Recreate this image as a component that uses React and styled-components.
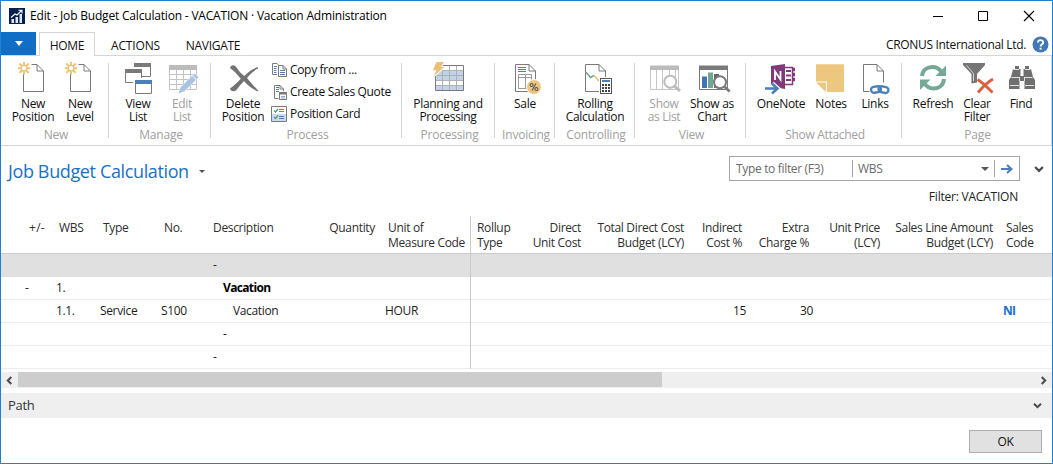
import React from "react";
import styled, { createGlobalStyle, css } from "styled-components";

const GlobalStyle = createGlobalStyle`
  * { box-sizing: border-box; }
  body { margin: 0; background: #fff; }
  button { font: inherit; color: inherit; letter-spacing: inherit; border: 0; background: none; padding: 0; }
`;

const Window = styled.div`
  width: 1053px;
  height: 464px;
  border: 1px solid #1883d7;
  background: #fff;
  display: flex;
  flex-direction: column;
  overflow: hidden;
  font: 12px/15px "Open Sans", sans-serif;
  letter-spacing: -0.3px;
  color: #111;
  white-space: nowrap;
`;

const Label = styled.span`
  letter-spacing: ${(p) => p.$ls ?? -0.33}px;
`;

/* Title bar */
const TitleBar = styled.header`
  height: 31px;
  flex: none;
  display: flex;
  align-items: center;
  padding: 0 17px 2px 8px;
`;
const WindowTitle = styled.h1`
  flex: 1;
  margin: 0 0 0 5px;
  font-size: 12px;
  font-weight: 400;
  color: #000;
  letter-spacing: -0.19px;
`;
const WindowControls = styled.div`
  display: flex;
  gap: 34px;
`;

/* Tabs */
const TabBar = styled.nav`
  height: 24px;
  flex: none;
  display: flex;
  border-bottom: 1px solid #d5d5d5;
`;
const FileButton = styled.button`
  width: 35px;
  height: 23px;
  background: #106ec6;
  display: flex;
  align-items: center;
  justify-content: center;
  margin-right: 3px;
`;
const Tab = styled.button`
  height: 24px;
  width: ${(p) => p.$w}px;
  margin-right: ${(p) => p.$gap || 0}px;
  letter-spacing: ${(p) => p.$ls}px;
  padding-top: 2px;
  ${(p) =>
    p.$active &&
    css`
      background: #fff;
      border: 1px solid #d5d5d5;
      border-bottom: 0;
      padding-top: 1px;
    `}
`;
const Company = styled.div`
  margin-left: auto;
  display: flex;
  align-items: center;
  gap: 6px;
  padding: 1px 3px 0 0;
`;

/* Ribbon */
const Ribbon = styled.section`
  height: 90px;
  flex: none;
  display: flex;
  border: 1px solid #d5d5d5;
  border-top: 0;
  border-left: 0;
`;
const Group = styled.div`
  width: ${(p) => p.$w}px;
  padding-left: ${(p) => p.$pad ?? 7}px;
  display: grid;
  grid-template-rows: 72px 15px;
  background: linear-gradient(#d5d5d5, #d5d5d5) no-repeat right 7px / 1px 75px;
  &:last-child { background: none; }
`;
const GroupItems = styled.div`
  display: flex;
`;
const GroupName = styled.div`
  text-align: center;
  color: #a0a0a0;
  margin-left: -${(p) => p.$pad ?? 7}px;
  padding-left: 2px;
  line-height: 14px;
  letter-spacing: ${(p) => p.$ls ?? -0.2}px;
`;
const BigButton = styled.button`
  width: ${(p) => p.$w}px;
  padding-top: 6px;
  display: flex;
  flex-direction: column;
  align-items: center;
  color: ${(p) => (p.$disabled ? "#a0a0a0" : "#111")};
`;
const BigIcon = styled.svg`
  width: 32px;
  height: 32px;
  flex: none;
  overflow: visible;
  margin-bottom: 3px;
`;
const ButtonLine = styled.span`
  height: 13px;
  line-height: 13px;
  letter-spacing: ${(p) => p.$ls ?? -0.3}px;
`;
const SmallButtons = styled.div`
  padding: 3px 0 0 3px;
  display: flex;
  flex-direction: column;
`;
const SmallButton = styled.button`
  height: 22px;
  line-height: 14px;
  display: flex;
  align-items: center;
  gap: 2px;
  & > span { padding-bottom: 1px; }
`;

/* Page heading and filter */
const PageHead = styled.section`
  height: 70px;
  flex: none;
  display: flex;
  justify-content: space-between;
  padding: 10px 8px 0 7px;
`;
const PageTitle = styled.h2`
  margin: 0;
  height: 30px;
  display: flex;
  align-items: center;
  gap: 10px;
  font-size: 18px;
  line-height: 24px;
  font-weight: 400;
  letter-spacing: -0.37px;
  color: #1a70c4;
`;
const FilterArea = styled.div`
  display: flex;
  flex-direction: column;
`;
const FilterRow = styled.div`
  display: flex;
  align-items: center;
  gap: 14px;
`;
const FilterBox = styled.div`
  width: 291px;
  height: 25px;
  border: 1px solid #a6a6a6;
  display: grid;
  grid-template-columns: 122px 142px 25px;
  align-items: center;
  color: #6b6b6b;
`;
const FilterPart = styled.div`
  height: 17px;
  display: flex;
  align-items: center;
  justify-content: ${(p) => (p.$center ? "center" : "space-between")};
  padding: 0 ${(p) => (p.$center ? 0 : 5)}px;
  border-left: ${(p) => (p.$first ? "none" : "1px solid #a6a6a6")};
  ${(p) => p.$first && "padding-left: 6px;"}
`;
const ActiveFilter = styled.div`
  width: 291px;
  padding: 8px 2px 0 0;
  text-align: right;
  color: #222;
  letter-spacing: -0.22px;
`;

/* Lines */
const columns =
  "52px 44px 61px 49px 113px 62px 89px 59px 58px 103px 58px 67px 71px 113px 1fr";

const Table = styled.section`
  flex: none;
  height: 156px;
`;
const HeaderRow = styled.div`
  height: 38px;
  display: grid;
  grid-template-columns: ${columns};
  border-bottom: 1px solid #cbcbcb;
  color: #2e2e2e;
`;
const HeaderCell = styled.div`
  display: flex;
  flex-direction: column;
  padding: 4px ${(p) => (p.$right ? 7 : 6)}px 0 ${(p) => p.$pl ?? 6}px;
  align-items: ${(p) => (p.$right ? "flex-end" : "flex-start")};
  ${(p) => p.$frozen && "border-right: 1px solid #cbcbcb;"}
`;
const Row = styled.div`
  height: 23px;
  display: grid;
  grid-template-columns: ${columns};
  line-height: 22px;
  color: #1c1c1c;
  background: ${(p) => (p.$selected ? "#e0e0e0" : "#fff")};
  border-bottom: 1px solid ${(p) => (p.$selected ? "#e0e0e0" : "#ececec")};
`;
const Cell = styled.div`
  height: 23px;
  padding: 0 3px 0 ${(p) => p.$pl ?? 3}px;
  text-align: ${(p) => (p.$right ? "right" : "left")};
  font-weight: ${(p) => (p.$bold ? 700 : 400)};
  letter-spacing: ${(p) => (p.$bold ? -0.65 : -0.35)}px;
  color: ${(p) => (p.$link ? "#1a6fd0" : p.$bold ? "#000" : "inherit")};
  ${(p) => p.$frozen && "border-right: 1px solid #cbcbcb;"}
`;

/* Scroll bar and footer */
const ScrollBar = styled.div`
  height: 16px;
  flex: none;
  display: flex;
  align-items: center;
  background: #efefef;
`;
const ScrollButton = styled.button`
  width: 17px;
  height: 15px;
  display: flex;
  align-items: center;
  justify-content: center;
`;
const ScrollTrack = styled.div`
  flex: 1;
  height: 16px;
`;
const ScrollThumb = styled.div`
  width: 644px;
  height: 15px;
  background: #cdcdcd;
`;
const PathBar = styled.section`
  height: 25px;
  flex: none;
  margin-top: 5px;
  padding: 0 10px 0 7px;
  display: flex;
  align-items: center;
  justify-content: space-between;
  background: #efefef;
  color: #333;
  font-size: 13px;
`;
const Footer = styled.footer`
  display: flex;
  justify-content: flex-end;
  padding: 12px 10px 0 0;
`;
const OkButton = styled.button`
  width: 73px;
  height: 23px;
  border: 1px solid #adadad;
  background: #e1e1e1;
  text-align: center;
`;

/* Icons */
const G = "#7a7a7a";
const Page = ({ children, plain }) => (
  <>
    <path
      d={plain ? "M6.5 2.5H20L26.5 9V29.5H6.5Z" : "M6.5 12V29.5H26.5V9L20 2.5H14.5"}
      fill="none"
      stroke={G}
    />
    <path d="M20 2.5V9H26.5" fill="none" stroke={G} />
    {children}
  </>
);

const Magnifier = ({ x, y, color }) => (
  <g>
    <circle cx={x} cy={y} r="6" fill="#fff" stroke={color} strokeWidth="2" />
    <path d={`M${x + 4.5} ${y + 4.5}L${x + 9.7} ${y + 9.2}`} stroke={color} strokeWidth="2.8" />
  </g>
);

const icons = {
  newPage: (
    <Page>
      <g stroke="#ecc379" strokeWidth="2">
        <path d="M7 0V3.500M7 9V12.500M.8 6.200H4.300M9.700 6.200H13.200M2.300 1.500L5 4.200M9 8.200L11.700 10.900M2.300 10.900L5 8.200M9 4.200L11.700 1.500" />
        <circle cx="7" cy="6.200" r="2.800" fill="#fff" strokeWidth="1.400" />
      </g>
    </Page>
  ),
  windows: (
    <g fill="none" stroke={G}>
      <path d="M12.500 5V4M28.500 4V14.500H20" />
      <path d="M12 3H29" strokeWidth="4" />
      <path d="M3.500 9V20.500H11M19.500 10V16" />
      <path d="M3 9H20" strokeWidth="4" />
      <path d="M13.500 20V31.500H29.500V20" />
      <path d="M13 20H30" strokeWidth="4" stroke="#4a7fb9" />
    </g>
  ),
  editGrid: (
    <g>
      <path d="M3.500 8V27.500H30.500V8M3 12.500H31M3 17.500H31M3 22.500H31M10.500 8V28M17.500 8V28M24.500 8V28" fill="none" stroke="#c4c4c4" />
      <path d="M3 3H31V8H3Z" fill="#bcbcbc" />
      <path d="M12.500 31.500L14.500 25.500L28.500 11.500L32.600 15.200L18.500 29.300Z" fill="#a9c4e2" stroke="#fff" strokeWidth="1" paintOrder="stroke" />
      <path d="M26 13.500L30.300 17.600" stroke="#fff" />
    </g>
  ),
  cross: (
    <path
      d="M3 6C4 2.400 7.500 2.300 9.500 5.500C11.500 8.600 14.500 12 17.300 14C21.500 9.500 26 6.300 31 5V6.600C27 8.500 23 12 20 16C24 20.500 28 25.500 31.500 29L30.800 29.300C25 27 20.500 23 17 19C14 22 11.500 25 9.500 28C7.500 30 3.500 29.500 3 26.500C6.500 24 10.500 20.500 13.800 16.800C10.500 13 7.500 9 3 6Z"
      fill="#737373"
    />
  ),
  planning: (
    <g>
      <path d="M4 3.500H31.500V28.500H4Z" fill="#fff" />
      <path d="M4 8H31.500V18.500H4ZM4 23.500H31.500V28.500H4Z" fill="#c0d3e9" />
      <path d="M4 8.500H31M4 13.500H31M4 18.500H31M4 23.500H31M10.500 4V28M17.500 4V28M24.500 4V28" stroke="#b0b0b0" />
      <path d="M3.500 3.500H31.500V28.500H3.500Z" fill="none" stroke={G} />
      <path d="M4.500 0H12L8.800 5H12.300L1.500 14.500L4.500 8.200H.8Z" fill="#ecc07a" stroke="#fff" strokeWidth="2" paintOrder="stroke" />
    </g>
  ),
  sale: (
    <Page plain>
      <path d="M9 5.500H17M9 7.500H17M9 9.500H17" stroke="#4a7fb9" strokeWidth="1.200" />
      <path d="M9.500 12.500H22.500V26.500H9.500ZM16.500 12.500V26.500M9.500 15.500H22.500" fill="none" stroke="#9b9b9b" />
      <circle cx="25" cy="25" r="7.500" fill="#edc67f" stroke="#fff" />
      <g fill="none" stroke="#555" strokeWidth="1.100">
        <circle cx="22.600" cy="23" r="1.500" />
        <circle cx="27.400" cy="27" r="1.500" />
        <path d="M27 21.500L23 28.500" />
      </g>
    </Page>
  ),
  rolling: (
    <Page plain>
      <path d="M7 10.300L11.500 15.500L15 13.500" fill="none" stroke="#72a594" strokeWidth="1.600" />
      <path d="M15 13.500L20 19" fill="none" stroke="#ecc07a" strokeWidth="1.600" />
      <rect x="20" y="15" width="14" height="17.500" fill="#fff" />
      <rect x="21.500" y="16.500" width="11" height="15" fill="#fff" stroke="#555" />
      <path d="M23 19H31" stroke="#4a7fb9" strokeWidth="2" />
      <path d="M23 23H31M23 26H31M23 29H31" stroke="#444" strokeWidth="2" strokeDasharray="2 1" />
    </Page>
  ),
  showList: (
    <g>
      <path d="M2.500 7V27.500H30.500V7M8.500 8V27M14.500 8V27M21.500 8V27M27.500 8V27" fill="none" stroke="#c6c6c6" />
      <path d="M2 3.500H31V8H2Z" fill="#bcbcbc" />
      <Magnifier x={22.300} y={19.700} color="#bcbcbc" />
    </g>
  ),
  showChart: (
    <g>
      <path d="M3.500 7V27.500H31.500V7" fill="#fff" stroke={G} />
      <path d="M3 3.500H32V8H3Z" fill={G} />
      <path d="M6 14.500H11V26H6Z" fill="#3f75b5" />
      <path d="M12 10.500H17V26H12Z" fill="#72a594" />
      <path d="M18 12H23V26H18Z" fill="#666" />
      <Magnifier x={24} y={20.300} color={G} />
    </g>
  ),
  oneNote: (
    <g>
      <path d="M20 5.500H27.500V22.500H20" fill="none" stroke="#80397b" strokeWidth="1.500" />
      <path d="M21 9H26M21 13.500H26M21 18H26" stroke="#80397b" strokeWidth="2" />
      <path d="M27 7.500H30M27 12.500H30M27 17.500H30" stroke="#80397b" strokeWidth="3.500" />
      <path d="M6 4L20 2V27L6 24.500Z" fill="#80397b" />
      <path d="M10 18V9.500L15.500 17.500V9" fill="none" stroke="#fff" strokeWidth="1.800" />
      <path d="M0 26.500H12M7 21.500L12.500 26.500L7 31.500" fill="none" stroke="#fff" strokeWidth="5" />
      <path d="M0 26.500H12M7 21.500L12.500 26.500L7 31.500" fill="none" stroke="#4a7fb9" strokeWidth="2.600" />
    </g>
  ),
  notes: (
    <g>
      <path d="M1 2.300H29V30H12V19.500H1Z" fill="#edc67f" />
      <path d="M1 20.500H11V30Z" fill="#edc67f" />
    </g>
  ),
  links: (
    <g fill="none" stroke={G}>
      <path d="M10.500 29.500H4.500V2.500H18L24.500 9V20.500M18 2.500V9H24.500" />
      <g stroke="#4a7fb9" strokeWidth="2.300">
        <rect x="12" y="24.500" width="10" height="6" rx="3" transform="rotate(-8 17 27.500)" />
        <rect x="19.500" y="24.500" width="10" height="6" rx="3" transform="rotate(12 24 27.500)" />
      </g>
    </g>
  ),
  refresh: (
    <g fill="none" stroke="#76a896" strokeWidth="4">
      <path d="M5 14C5.500 8 10 5 15.500 5C19.500 5 22.500 7 24.500 10" />
      <path d="M27 17C26.500 23 22 26.500 16.500 26.500C12.500 26.500 9.500 24.500 7.500 21.500" />
      <path d="M29 3.500V14H18.500Z" fill="#76a896" stroke="none" />
      <path d="M3 28V17.500H13.500Z" fill="#76a896" stroke="none" />
    </g>
  ),
  clearFilter: (
    <g>
      <path d="M2 1H24V3L16 12V20.500L10.500 21.500V12L2 3Z" fill="#757575" />
      <path d="M5.500 3.300L12.500 11.500V19" fill="none" stroke="#d5d5d5" />
      <path d="M16.500 17.500C21 20 26.500 25.500 31.500 30.500M32 17C27 20 22 24.500 17 30.500" fill="none" stroke="#d9603f" strokeWidth="2.800" />
    </g>
  ),
  find: (
    <g fill="#6f6f6f">
      <path d="M10 4H14V7H15.500V14H18.500V7H20V4H24V7H26L28 15L30 18V27H19.500V19H14.500V27H4V18L6 15L8 7H10Z" />
      <path d="M8.500 7.500H14M20 7.500H25.500M6.500 15.500H14M20 15.500H27.500M5 23.500H14M20 23.500H29M14.500 15V19M19.500 15V19" stroke="#fff" strokeWidth=".8" />
    </g>
  ),
};

const SmallIcon = styled.svg`
  width: 17px;
  height: 16px;
  flex: none;
`;

const CopyIcon = () => (
  <SmallIcon viewBox="0 0 17 16">
    <path d="M6 12.500H1.500V1.500H6L8.500 4" fill="none" stroke={G} />
    <path d="M3 4.500H6M3 6.500H5.500M3 8.500H5.500M3 10.500H5.500" stroke="#4a7fb9" />
    <path d="M7.500 3.500H12L15.500 7V14.500H7.500ZM12 3.500V7H15.500" fill="#fff" stroke={G} />
    <path d="M9 8.500H14M9 10.500H14M9 12.500H14" stroke="#4a7fb9" />
  </SmallIcon>
);
const QuoteIcon = () => (
  <SmallIcon viewBox="0 0 17 16">
    <path d="M7.500 14.500H3.500V1.500H9L12.500 5V7M9 1.500V5H12.500" fill="none" stroke={G} />
    <path d="M5 3.500H8M5 5.500H8M5 7.500H8" stroke="#4a7fb9" />
    <path d="M8.500 8.500H15.500V15.500H8.500Z" fill="#fff" stroke={G} />
    <path d="M8 9.500H16" stroke={G} strokeWidth="2" />
    <path d="M10 12.500H14M10 14H14" stroke="#8dadd2" />
  </SmallIcon>
);
const CardIcon = () => (
  <SmallIcon viewBox="0 0 17 16">
    <path d="M.5 .5H15.500V15.500H.5Z" fill="#fff" stroke={G} />
    <path d="M1 8H15V15H1Z" fill="#c9dbee" />
    <path d="M3 4.500L4.500 6L7 3M3 11L4.500 12.500L7 9.500" fill="none" stroke="#4f9a7b" strokeWidth="1.200" />
    <path d="M8 3.500H13M8 5.500H13" stroke="#d9603f" />
    <path d="M8 10.500H13M8 12.500H13" stroke="#4a7fb9" />
  </SmallIcon>
);

const Caret = ({ w = 7, h = 4, color = "#555" }) => (
  <svg width={w} height={h} viewBox="0 0 8 4" preserveAspectRatio="none">
    <path d="M0 0H8L4 4Z" fill={color} />
  </svg>
);
const Chevron = ({ dir = "down", w = 9, h = 7 }) => {
  const turn = { down: 0, left: 90, right: -90 }[dir];
  return (
    <svg width={w} height={h} viewBox="-4.500 -3.500 9 7" overflow="visible">
      <path d="M-3.500 -1.800L0 1.700L3.500 -1.800" fill="none" stroke="#4a4a4a" strokeWidth="2" transform={`rotate(${turn})`} />
    </svg>
  );
};

const ribbonGroups = [
  { name: "New", w: 108, pad: 8, items: [
    { icon: "newPage", w: 48, text: ["New", "Position"] },
    { icon: "newPage", w: 46, text: ["New", "Level"] },
  ] },
  { name: "Manage", w: 102, items: [
    { icon: "windows", w: 44, text: ["View", "List"] },
    { icon: "editGrid", w: 44, text: ["Edit", "List"], disabled: true },
  ] },
  { name: "Process", w: 191, items: [
    { icon: "cross", w: 50, text: ["Delete", "Position"] },
  ], small: [
    { Icon: CopyIcon, text: "Copy from ..." },
    { Icon: QuoteIcon, text: "Create Sales Quote" },
    { Icon: CardIcon, text: "Position Card" },
  ] },
  { name: "Processing", w: 93, pad: 8, items: [
    { icon: "planning", w: 76, text: ["Planning and", "Processing"] },
  ] },
  { name: "Invoicing", w: 60, pad: 8, items: [
    { icon: "sale", w: 44, text: ["Sale"] },
  ] },
  { name: "Controlling", w: 80, items: [
    { icon: "rolling", w: 66, text: ["Rolling", "Calculation"] },
  ] },
  { name: "View", w: 111, items: [
    { icon: "showList", w: 44, text: ["Show", "as List"], disabled: true },
    { icon: "showChart", w: 52, text: ["Show as", "Chart"] },
  ] },
  { name: "Show Attached", w: 156, ls: -0.3, items: [
    { icon: "oneNote", w: 56, text: ["OneNote"] },
    { icon: "notes", w: 44, text: ["Notes"] },
    { icon: "links", w: 44, text: ["Links"] },
  ] },
  { name: "Page", w: 149, items: [
    { icon: "refresh", w: 48, text: ["Refresh"] },
    { icon: "clearFilter", w: 40, text: ["Clear", "Filter"] },
    { icon: "find", w: 48, text: ["Find"] },
  ] },
];

const headers = [
  { text: ["+/-"], pl: 28, ls: 0.3 },
  { text: ["WBS"] },
  { text: ["Type"] },
  { text: ["No."] },
  { text: ["Description"] },
  { text: ["Quantity"], right: true },
  { text: ["Unit of", "Measure Code"], frozen: true },
  { text: ["Rollup", "Type"] },
  { text: ["Direct", "Unit Cost"], right: true },
  { text: ["Total Direct Cost", "Budget (LCY)"], right: true },
  { text: ["Indirect", "Cost %"], right: true },
  { text: ["Extra", "Charge %"], right: true },
  { text: ["Unit Price", "(LCY)"], right: true },
  { text: ["Sales Line Amount", "Budget (LCY)"], right: true },
  { text: ["Sales", "Code"] },
];

const lines = [
  { description: "-", indent: 0, selected: true },
  { toggle: "-", wbs: "1.", description: "Vacation", indent: 1, bold: true },
  { wbs: "1.1.", type: "Service", no: "S100", description: "Vacation", indent: 2, unit: "HOUR", indirect: "15", extra: "30", code: "NI" },
  { description: "-", indent: 1 },
  { description: "-", indent: 0 },
];

const Line = ({ line }) => (
  <Row $selected={line.selected}>
    <Cell $pl={24}>{line.toggle}</Cell>
    <Cell>{line.wbs}</Cell>
    <Cell>{line.type}</Cell>
    <Cell>{line.no}</Cell>
    <Cell $pl={6 + line.indent * 10} $bold={line.bold}>{line.description}</Cell>
    <Cell $right />
    <Cell $frozen>{line.unit}</Cell>
    <Cell />
    <Cell $right />
    <Cell $right />
    <Cell $right>{line.indirect}</Cell>
    <Cell $right>{line.extra}</Cell>
    <Cell $right />
    <Cell $right />
    <Cell $bold={!!line.code} $link>{line.code}</Cell>
  </Row>
);

export default function App() {
  return (
    <>
      <GlobalStyle />
      <Window>
        <TitleBar>
          <svg width="16" height="16" viewBox="0 0 16 16">
            <path d="M0 0H16V16H0Z" fill="#06204e" />
            <path d="M2.500 11H5V15H2.500ZM6.500 9H9V15H6.500ZM10.500 6H13V15H10.500Z" fill="#dfe6f0" />
            <path d="M2 9.500L6 6L8 7L12.500 2.500M9.500 2.300H13V5.500" fill="none" stroke="#fff" strokeWidth="1.100" />
          </svg>
          <WindowTitle>Edit - Job Budget Calculation - VACATION · Vacation Administration</WindowTitle>
          <WindowControls>
            <svg width="12" height="12" viewBox="0 0 12 12"><path d="M2 6.500H12" stroke="#000" /></svg>
            <svg width="12" height="12" viewBox="0 0 12 12"><path d="M1.500 1.500H10.500V10.500H1.500Z" fill="none" stroke="#000" /></svg>
            <svg width="12" height="12" viewBox="0 0 12 12"><path d="M1 1L11 11M11 1L1 11" stroke="#000" strokeWidth="1.100" /></svg>
          </WindowControls>
        </TitleBar>

        <TabBar>
          <FileButton><Caret w={8} h={5} color="#fff" /></FileButton>
          <Tab $w={56} $active $gap={11} $ls={-0.3}>HOME</Tab>
          <Tab $w={59} $gap={9} $ls={-0.15}>ACTIONS</Tab>
          <Tab $w={78} $ls={-0.3}>NAVIGATE</Tab>
          <Company>
            <Label>CRONUS International Ltd.</Label>
            <svg width="17" height="17" viewBox="0 0 17 17">
              <circle cx="8.500" cy="8.500" r="8" fill="#4278b4" />
              <path d="M6 6.500C6 3.300 11.200 3.300 11.200 6.400C11.200 8.400 8.600 8.300 8.600 10.500" fill="none" stroke="#fff" strokeWidth="1.900" />
              <path d="M7.600 11.700H9.600V13.600H7.600Z" fill="#fff" />
            </svg>
          </Company>
        </TabBar>

        <Ribbon>
          {ribbonGroups.map((g) => (
            <Group key={g.name} $w={g.w} $pad={g.pad}>
              <GroupItems>
                {g.items.map((b, i) => (
                  <BigButton key={i} $w={b.w} $disabled={b.disabled}>
                    <BigIcon viewBox="0 0 32 32">{icons[b.icon]}</BigIcon>
                    {b.text.map((t) => (
                      <ButtonLine key={t} $ls={b.ls}>{t}</ButtonLine>
                    ))}
                  </BigButton>
                ))}
                {g.small && (
                  <SmallButtons>
                    {g.small.map(({ Icon, text }) => (
                      <SmallButton key={text}><Icon /><Label>{text}</Label></SmallButton>
                    ))}
                  </SmallButtons>
                )}
              </GroupItems>
              <GroupName $pad={g.pad} $ls={g.ls}>{g.name}</GroupName>
            </Group>
          ))}
        </Ribbon>

        <PageHead>
          <PageTitle>Job Budget Calculation <Caret w={6} h={3} /></PageTitle>
          <FilterArea>
            <FilterRow>
              <FilterBox>
                <FilterPart $first><Label>Type to filter (F3)</Label></FilterPart>
                <FilterPart><Label>WBS</Label><Caret w={8} h={4} /></FilterPart>
                <FilterPart $center>
                  <svg width="12" height="10" viewBox="0 0 12 10">
                    <path d="M0 5H10M6 1L10.500 5L6 9" fill="none" stroke="#4a7fb9" strokeWidth="2" />
                  </svg>
                </FilterPart>
              </FilterBox>
              <Chevron w={10} h={8} />
            </FilterRow>
            <ActiveFilter>Filter: VACATION</ActiveFilter>
          </FilterArea>
        </PageHead>

        <Table>
          <HeaderRow>
            {headers.map((h, i) => (
              <HeaderCell key={i} $right={h.right} $pl={h.pl} $frozen={h.frozen}>
                {h.text.map((t) => <Label key={t} $ls={h.ls}>{t}</Label>)}
              </HeaderCell>
            ))}
          </HeaderRow>
          {lines.map((line, i) => <Line key={i} line={line} />)}
        </Table>

        <ScrollBar>
          <ScrollButton><Chevron dir="left" /></ScrollButton>
          <ScrollTrack><ScrollThumb /></ScrollTrack>
          <ScrollButton><Chevron dir="right" /></ScrollButton>
        </ScrollBar>

        <PathBar>
          <Label>Path</Label>
          <Chevron w={9} h={7} />
        </PathBar>

        <Footer><OkButton>OK</OkButton></Footer>
      </Window>
    </>
  );
}
